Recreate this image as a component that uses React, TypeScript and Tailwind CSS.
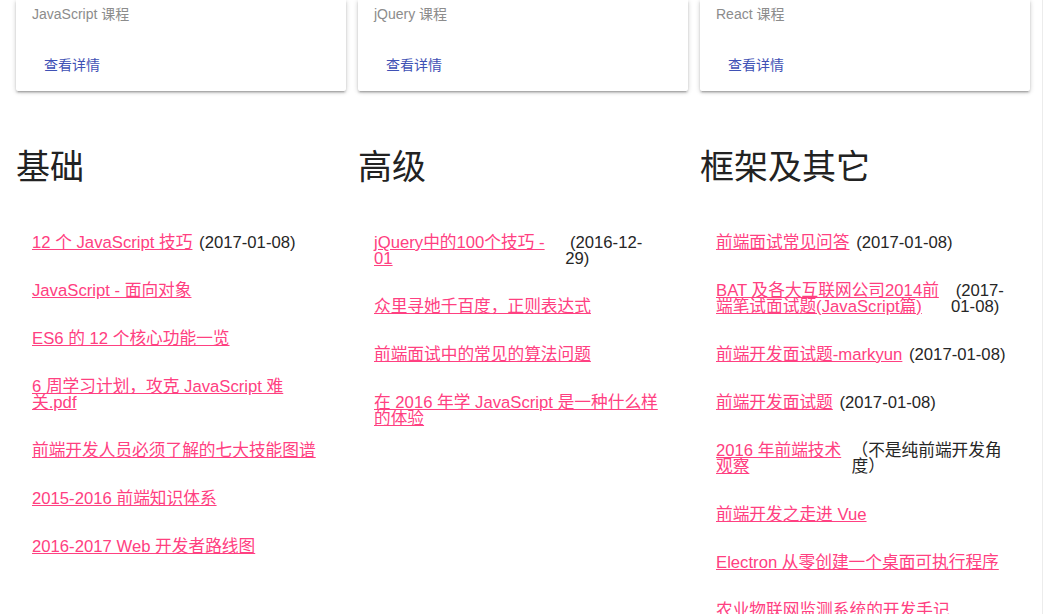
import React from "react";

type Item = { title: string; date?: string };

const courses = ["JavaScript 课程", "jQuery 课程", "React 课程"];

// dates keep their leading nbsp, the full-width note brings its own spacing
const sections: { name: string; items: Item[] }[] = [
    {
        name: "基础",
        items: [
            { title: "12 个 JavaScript 技巧", date: "\u00a0(2017-01-08)" },
            { title: "JavaScript - 面向对象" },
            { title: "ES6 的 12 个核心功能一览" },
            { title: "6 周学习计划，攻克 JavaScript 难关.pdf" },
            { title: "前端开发人员必须了解的七大技能图谱" },
            { title: "2015-2016 前端知识体系" },
            { title: "2016-2017 Web 开发者路线图" },
        ],
    },
    {
        name: "高级",
        items: [
            { title: "jQuery中的100个技巧 - 01", date: "\u00a0(2016-12-29)" },
            { title: "众里寻她千百度，正则表达式" },
            { title: "前端面试中的常见的算法问题" },
            { title: "在 2016 年学 JavaScript 是一种什么样的体验" },
        ],
    },
    {
        name: "框架及其它",
        items: [
            { title: "前端面试常见问答", date: "\u00a0(2017-01-08)" },
            { title: "BAT 及各大互联网公司2014前端笔试面试题(JavaScript篇)", date: "\u00a0(2017-01-08)" },
            { title: "前端开发面试题-markyun", date: "\u00a0(2017-01-08)" },
            { title: "前端开发面试题", date: "\u00a0(2017-01-08)" },
            { title: "2016 年前端技术观察", date: "（不是纯前端开发角度）" },
            { title: "前端开发之走进 Vue" },
            { title: "Electron 从零创建一个桌面可执行程序" },
            { title: "农业物联网监测系统的开发手记" },
        ],
    },
];

function CourseCard({ label }: { label: string }) {
    return (
        <div className="rounded-b-[2px] bg-white shadow-[0_2px_2px_0_rgba(0,0,0,0.14),0_3px_1px_-2px_rgba(0,0,0,0.12),0_1px_5px_0_rgba(0,0,0,0.2)]">
            <p className="px-4 pt-[4px] text-[14px] leading-[20px] text-[#8c8c8c]">{label}</p>
            <div className="mt-[31px] pb-4 pl-7 text-[14px] leading-[20px]">
                <a href="#" className="text-[#3f51b5]">
                    查看详情
                </a>
            </div>
        </div>
    );
}

export default function App() {
    return (
        <div className="min-h-screen w-[1043px] overflow-hidden border-r border-[#ececec] bg-white font-['Liberation_Sans','Noto_Sans_CJK_SC',sans-serif]">
            <div className="grid grid-cols-3 gap-x-3 pl-4 pr-3">
                {courses.map((c) => (
                    <CourseCard key={c} label={c} />
                ))}
            </div>

            <div className="grid grid-cols-3 items-start gap-x-3 pl-4 pr-3">
                {sections.map((s) => (
                    <section key={s.name}>
                        <h4 className="mt-[56px] text-[34px] font-normal leading-[40px] text-[#222]">{s.name}</h4>
                        <ul className="mt-[32px] pl-4 pr-6">
                            {s.items.map((it) => (
                                <li key={it.title} className="flex py-4 text-[16.7px] leading-4">
                                    <a href="#" className="text-[#ff4081] underline">
                                        {it.title}
                                    </a>
                                    {it.date && (
                                        <span className="pl-0.5 text-[#262626] [text-spacing-trim:space-all]">{it.date}</span>
                                    )}
                                </li>
                            ))}
                        </ul>
                    </section>
                ))}
            </div>
        </div>
    );
}
